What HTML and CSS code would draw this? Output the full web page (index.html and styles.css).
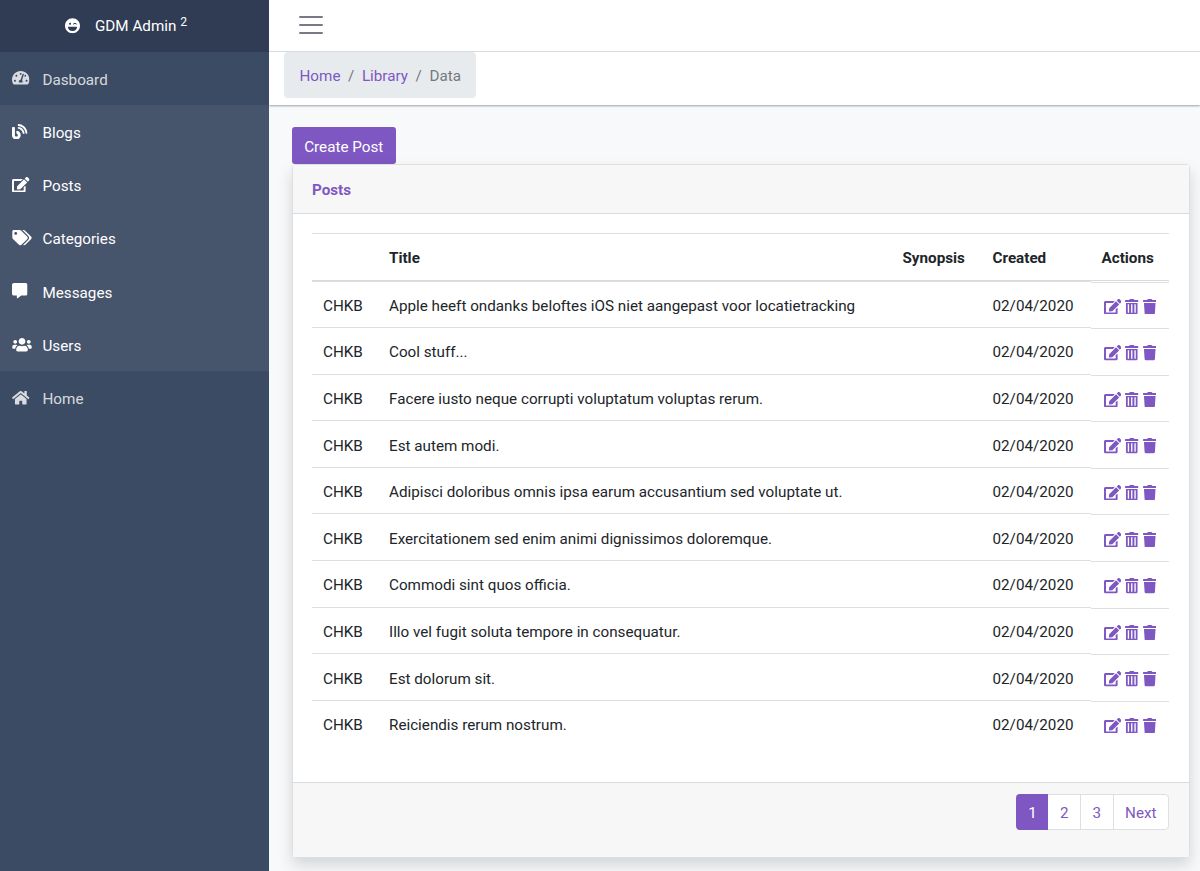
FILE: index.html
```
<!DOCTYPE html>
<html lang="en">
<head>
    <meta charset="UTF-8">
    <meta name="viewport" content="width=device-width, initial-scale=1.0">
    <title>GDM Admin</title>
    <link rel="stylesheet" href="styles.css">
</head>
<body>
    <!-- Icon shapes -->
    <svg class="sprite" xmlns="http://www.w3.org/2000/svg">
        <symbol id="laugh" viewBox="0 0 496 512"><path d="M248 8C111 8 0 119 0 256s111 248 248 248 248-111 248-248S385 8 248 8zm20.1 198.1c4-25.2 34.2-42.1 59.9-42.1s55.9 16.9 59.9 42.1c1.7 11.1-11.4 18.3-19.8 10.8l-9.5-8.5c-14.8-13.2-46.2-13.2-61 0L288 217c-8.4 7.4-21.6.3-19.9-10.9zM168 160c17.7 0 32 14.3 32 32s-14.3 32-32 32-32-14.3-32-32 14.3-32 32-32zm88 272h-16c-73.4 0-134-55-142.9-126-1.2-9.5 6.3-18 15.9-18h270c9.6 0 17.1 8.4 15.9 18-8.9 71-69.5 126-142.9 126z"/></symbol>
        <symbol id="gauge" viewBox="0 0 576 512"><path d="M288 32C128.94 32 0 160.94 0 320c0 52.8 14.25 102.26 39.06 144.8 5.61 9.62 16.3 15.2 27.44 15.2h443c11.14 0 21.83-5.58 27.44-15.2C561.75 422.26 576 372.8 576 320c0-159.06-128.94-288-288-288zm0 64c14.71 0 26.58 10.13 30.32 23.65-1.11 2.26-2.64 4.23-3.45 6.67l-9.22 27.67c-5.13 3.49-10.97 6.01-17.64 6.01-17.67 0-32-14.33-32-32S270.33 96 288 96zM96 384c-17.67 0-32-14.33-32-32s14.33-32 32-32 32 14.33 32 32-14.33 32-32 32zm48-160c-17.67 0-32-14.33-32-32s14.33-32 32-32 32 14.33 32 32-14.33 32-32 32zm246.77-72.41l-61.33 184C343.13 347.33 352 364.54 352 384c0 11.72-3.38 22.55-8.88 32H232.88c-5.5-9.45-8.88-20.28-8.88-32 0-33.94 26.5-61.43 59.9-63.59l61.34-184.01c4.17-12.56 17.73-19.45 30.36-15.17 12.57 4.19 19.35 17.79 15.17 30.36zm14.66 57.2l15.52-46.55c3.47-1.29 7.13-2.23 11.05-2.23 17.67 0 32 14.33 32 32s-14.33 32-32 32c-11.38-.01-20.89-6.28-26.57-15.22zM480 384c-17.67 0-32-14.33-32-32s14.33-32 32-32 32 14.33 32 32-14.33 32-32 32z"/></symbol>
        <symbol id="blog" viewBox="0 0 512 512"><path d="M172.2 226.8c-14.6-2.9-28.2 8.9-28.2 23.8V301c0 10.2 7.1 18.4 16.7 22 18.2 6.8 31.3 24.4 31.3 45 0 26.5-21.5 48-48 48s-48-21.5-48-48V120c0-13.3-10.7-24-24-24H24c-13.3 0-24 10.7-24 24v248c0 89.5 82.1 160.2 175 140.7 54.4-11.4 98.3-55.4 109.7-109.7 17.4-82.9-37-157.2-112.5-172.2zM209 0c-9.2-.5-17 6.8-17 16v31.6c0 8.5 6.6 15.5 15 15.9 129.4 7 233.4 112 240.9 241.5.5 8.4 7.5 15 15.9 15h32.1c9.2 0 16.5-7.8 16-17C503.4 139.8 372.2 8.6 209 0zm.3 96c-9.3-.7-17.3 6.7-17.3 16.1v32.1c0 8.4 6.5 15.3 14.8 15.9 76.8 6.3 138 68.2 144.9 145.2.8 8.3 7.6 14.7 15.9 14.7h32.2c9.3 0 16.8-8 16.1-17.3-8.4-110.1-96.5-198.2-206.6-206.7z"/></symbol>
        <symbol id="edit" viewBox="0 0 576 512"><path d="M402.6 83.2l90.2 90.2c3.8 3.8 3.8 10 0 13.8L274.4 405.6l-92.8 10.3c-12.4 1.4-22.9-9.1-21.5-21.5l10.3-92.8L388.8 83.2c3.8-3.8 10-3.8 13.8 0zm162-22.9l-48.8-48.8c-15.2-15.2-39.9-15.2-55.2 0l-35.4 35.4c-3.8 3.8-3.8 10 0 13.8l90.2 90.2c3.8 3.8 10 3.8 13.8 0l35.4-35.4c15.2-15.3 15.2-40 0-55.2zM384 346.2V448H64V128h229.8c3.2 0 6.2-1.3 8.5-3.5l40-40c7.6-7.6 2.2-20.5-8.5-20.5H48C21.5 64 0 85.5 0 112v352c0 26.5 21.5 48 48 48h352c26.5 0 48-21.5 48-48V306.2c0-10.7-12.9-16-20.5-8.5l-40 40c-2.2 2.3-3.5 5.3-3.5 8.5z"/></symbol>
        <symbol id="tags" viewBox="0 0 640 512"><path d="M497.941 225.941L286.059 14.059A48 48 0 0 0 252.118 0H48C21.49 0 0 21.49 0 48v204.118a48 48 0 0 0 14.059 33.941l211.882 211.882c18.744 18.745 49.136 18.746 67.882 0l204.118-204.118c18.745-18.745 18.745-49.137 0-67.882zM112 160c-26.51 0-48-21.49-48-48s21.49-48 48-48 48 21.49 48 48-21.49 48-48 48zm513.941 133.823L421.823 497.941c-18.745 18.745-49.137 18.745-67.882 0l-.36-.36L527.64 323.522c16.999-16.999 26.36-39.6 26.36-63.64s-9.362-46.641-26.36-63.64L331.397 0h48.721a48 48 0 0 1 33.941 14.059l211.882 211.882c18.745 18.745 18.745 49.137 0 67.882z"/></symbol>
        <symbol id="message" viewBox="0 0 512 512"><path d="M448 0H64C28.7 0 0 28.7 0 64v288c0 35.3 28.7 64 64 64h96v84c0 9.8 11.2 15.5 19.1 9.7L304 416h144c35.3 0 64-28.7 64-64V64c0-35.3-28.7-64-64-64z"/></symbol>
        <symbol id="users" viewBox="0 0 640 512"><path d="M96 224c35.3 0 64-28.7 64-64s-28.7-64-64-64-64 28.7-64 64 28.7 64 64 64zm448 0c35.3 0 64-28.7 64-64s-28.7-64-64-64-64 28.7-64 64 28.7 64 64 64zm32 32h-64c-17.6 0-33.5 7.1-45.1 18.6 40.3 22.1 68.9 62 75.1 109.4h66c17.7 0 32-14.3 32-32v-32c0-35.3-28.7-64-64-64zm-256 0c61.9 0 112-50.1 112-112S381.9 32 320 32 208 82.1 208 144s50.1 112 112 112zm76.8 32h-8.3c-20.8 10-43.9 16-68.5 16s-47.6-6-68.5-16h-8.3C179.6 288 128 339.6 128 403.2V432c0 26.5 21.5 48 48 48h288c26.5 0 48-21.5 48-48v-28.8c0-63.6-51.6-115.2-115.2-115.2zm-223.7-13.4C161.5 263.1 145.6 256 128 256H64c-35.3 0-64 28.7-64 64v32c0 17.7 14.3 32 32 32h65.9c6.3-47.4 34.9-87.3 75.2-109.4z"/></symbol>
        <symbol id="house" viewBox="0 0 576 512"><path d="M280.37 148.26L96 300.11V464a16 16 0 0 0 16 16l112.06-.29a16 16 0 0 0 15.92-16V368a16 16 0 0 1 16-16h64a16 16 0 0 1 16 16v95.64a16 16 0 0 0 16 16.05L464 480a16 16 0 0 0 16-16V300L295.67 148.26a12.19 12.19 0 0 0-15.3 0zM571.6 251.47L488 182.56V44.05a12 12 0 0 0-12-12h-56a12 12 0 0 0-12 12v72.61L318.47 43a48 48 0 0 0-61 0L4.34 251.47a12 12 0 0 0-1.6 16.9l25.5 31A12 12 0 0 0 45.15 301l235.22-193.74a12.19 12.19 0 0 1 15.3 0L530.9 301a12 12 0 0 0 16.9-1.6l25.5-31a12 12 0 0 0-1.7-16.93z"/></symbol>
        <symbol id="bin" viewBox="0 0 448 512"><path fill-rule="evenodd" d="M432 32H312l-9.4-18.7A24 24 0 0 0 281.1 0H166.8a23.72 23.72 0 0 0-21.4 13.3L136 32H16A16 16 0 0 0 0 48v32a16 16 0 0 0 16 16h416a16 16 0 0 0 16-16V48a16 16 0 0 0-16-16zM32 128h384v336a48 48 0 0 1-48 48H80a48 48 0 0 1-48-48zM92 176v276h44V176zM202 176v276h44V176zM312 176v276h44V176z"/></symbol>
        <symbol id="trash" viewBox="0 0 448 512"><path d="M432 32H312l-9.4-18.7A24 24 0 0 0 281.1 0H166.8a23.72 23.72 0 0 0-21.4 13.3L136 32H16A16 16 0 0 0 0 48v32a16 16 0 0 0 16 16h416a16 16 0 0 0 16-16V48a16 16 0 0 0-16-16zM53.2 467a48 48 0 0 0 47.9 45h245.8a48 48 0 0 0 47.9-45L416 128H32z"/></symbol>
    </svg>

    <div class="wrapper">
        <!-- Sidebar -->
        <nav class="sidebar">
            <a class="brand" href="#"><svg class="icon"><use href="#laugh"/></svg><span>GDM Admin <sup>2</sup></span></a>
            <a class="item" href="#"><svg class="icon"><use href="#gauge"/></svg>Dasboard</a>
            <div class="group">
                <a class="item" href="#"><svg class="icon narrow"><use href="#blog"/></svg>Blogs</a>
                <a class="item" href="#"><svg class="icon"><use href="#edit"/></svg>Posts</a>
                <a class="item" href="#"><svg class="icon wide"><use href="#tags"/></svg>Categories</a>
                <a class="item" href="#"><svg class="icon narrow"><use href="#message"/></svg>Messages</a>
                <a class="item" href="#"><svg class="icon wide"><use href="#users"/></svg>Users</a>
            </div>
            <a class="item" href="#"><svg class="icon"><use href="#house"/></svg>Home</a>
        </nav>

        <div class="main">
            <header class="topbar">
                <div class="toggle-row">
                    <button class="toggler" aria-label="Menu"><span></span><span></span><span></span></button>
                </div>
                <div class="crumb-row">
                    <ol class="breadcrumb">
                        <li><a href="#">Home</a></li>
                        <li><a href="#">Library</a></li>
                        <li>Data</li>
                    </ol>
                </div>
            </header>

            <div class="content">
                <a class="btn" href="#">Create Post</a>
                <div class="card">
                    <div class="card-header">Posts</div>
                    <div class="card-body">
                        <table class="table">
                            <thead>
                                <tr>
                                    <th class="col-tag"></th>
                                    <th class="col-title">Title</th>
                                    <th class="col-synopsis">Synopsis</th>
                                    <th class="col-created">Created</th>
                                    <th class="col-actions">Actions</th>
                                </tr>
                            </thead>
                            <tbody id="posts"></tbody>
                        </table>
                    </div>
                    <div class="card-footer">
                        <ul class="pagination">
                            <li class="active"><a href="#">1</a></li>
                            <li><a href="#">2</a></li>
                            <li><a href="#">3</a></li>
                            <li><a href="#">Next</a></li>
                        </ul>
                    </div>
                </div>
            </div>
        </div>
    </div>

    <script>
        const titles = [
            'Apple heeft ondanks beloftes iOS niet aangepast voor locatietracking',
            'Cool stuff...',
            'Facere iusto neque corrupti voluptatum voluptas rerum.',
            'Est autem modi.',
            'Adipisci doloribus omnis ipsa earum accusantium sed voluptate ut.',
            'Exercitationem sed enim animi dignissimos doloremque.',
            'Commodi sint quos officia.',
            'Illo vel fugit soluta tempore in consequatur.',
            'Est dolorum sit.',
            'Reiciendis rerum nostrum.'
        ];

        // One table row per post
        document.getElementById('posts').innerHTML = titles.map(title => `
            <tr>
                <td>CHKB</td>
                <td>${title}</td>
                <td></td>
                <td>02/04/2020</td>
                <td class="actions"><div>
                    <svg class="act-edit"><use href="#edit"/></svg>
                    <svg class="act-bin"><use href="#bin"/></svg>
                    <svg class="act-bin"><use href="#trash"/></svg>
                </div></td>
            </tr>`).join('');
    </script>
</body>
</html>
```
FILE: styles.css
```
* {
    margin: 0;
    padding: 0;
    box-sizing: border-box;
}

body {
    font-family: Roboto, sans-serif;
    font-size: 15.22px;
    line-height: 1.5;
    color: #212529;
    background-color: #f8f9fb;
    overflow: hidden;
}

a {
    color: #7e57c2;
    text-decoration: none;
}

ul, ol {
    list-style: none;
}

svg {
    fill: currentColor;
}

.sprite {
    display: none;
}

.wrapper {
    display: flex;
    height: 871px;
}

/* Sidebar */
.sidebar {
    flex: 0 0 269px;
    background-color: #3c4b64;
}

.brand {
    display: flex;
    align-items: center;
    height: 51.5px;
    padding: 1px 0 0 65px;
    gap: 15px;
    color: #fff;
    background-color: #303c54;
}

.brand .icon {
    width: 15px;
    height: 15.5px;
    margin-bottom: 1px;
}

.brand sup {
    font-size: 80%;
    line-height: 0;
    position: relative;
    top: -0.4em;
    vertical-align: baseline;
}

.item {
    display: flex;
    align-items: center;
    height: 53.25px;
    padding: 4px 12px 0;
    color: rgba(255, 255, 255, 0.8);
}

.item .icon {
    width: 17.5px;
    height: 15.5px;
    margin: 0 13px 4px 0;
}

.item .icon.wide {
    width: 20px;
    margin-right: 10.5px;
}

.item .icon.narrow {
    width: 15.5px;
    margin-right: 15px;
}

.group {
    background-color: #46546c;
}

.group .item {
    color: #fff;
}

/* Top bar */
.main {
    flex: 1;
    min-width: 0;
}

.topbar {
    height: 105px;
    background-color: #fff;
    box-shadow: 0 1px 2px rgba(60, 75, 100, 0.5);
}

.toggle-row {
    height: 52px;
    padding: 16px 30px 0;
    border-bottom: 1px solid #d8dbe0;
}

.toggler {
    display: flex;
    flex-direction: column;
    gap: 6px;
    width: 24px;
    border: 0;
    background: none;
}

.toggler span {
    width: 24px;
    height: 2px;
    border-radius: 1px;
    background-color: #7b7885;
}

.crumb-row {
    padding-left: 15px;
}

.breadcrumb {
    display: inline-flex;
    height: 46px;
    padding: 13px 15px 0 15.5px;
    border-radius: 4px;
    background-color: #e8ebee;
}

.breadcrumb li {
    color: #73797e;
}

.breadcrumb li + li::before {
    content: "/";
    padding: 0 7.6px;
}

/* Content */
.content {
    padding: 22px 10.5px 0 23px;
}

.btn {
    display: block;
    width: 103.5px;
    height: 36.5px;
    line-height: 40px;
    text-align: center;
    color: #fff;
    background-color: #7e57c2;
    border-radius: 3px;
}

.card {
    display: flex;
    flex-direction: column;
    height: 694px;
    border: 1px solid #dddfe2;
    border-radius: 4px;
    background-color: #fff;
    box-shadow: 0 7px 15px rgba(0, 0, 0, 0.15);
}

.card-header {
    height: 49px;
    padding: 14px 19px 0;
    font-weight: 700;
    color: #7e57c2;
    background-color: #f7f7f7;
    border-bottom: 1px solid #d8dbe0;
}

.card-body {
    flex: 1;
    padding: 19px 19.5px 0 19px;
}

.card-footer {
    display: flex;
    justify-content: flex-end;
    height: 75px;
    padding: 11.5px 19.5px;
    background-color: #f7f7f7;
    border-top: 1px solid #d8dbe0;
}

/* Posts table */
.table {
    width: 100%;
    table-layout: fixed;
    border-spacing: 0;
}

.table th,
.table td {
    height: 46.6px;
    padding: 4px 11.5px 0 11px;
    text-align: left;
    vertical-align: middle;
    white-space: nowrap;
    border-top: 1px solid #dcdfe3;
}

.table th {
    height: 48px;
    border-bottom: 1px solid #d8dbe0;
}

.col-tag { width: 66px; }
.col-synopsis { width: 90px; }
.col-created { width: 109px; }
.col-actions { width: 78.5px; }

.table .actions {
    transform: translateY(1px);
}

.actions div {
    display: flex;
    align-items: center;
    gap: 4px;
    margin-top: -2px;
    padding-left: 2px;
    color: #7e57c2;
}

.act-edit {
    width: 17.5px;
    height: 15.5px;
}

.act-bin {
    width: 13.5px;
    height: 15.5px;
}

/* Pagination */
.pagination {
    display: flex;
    height: 36px;
    border: 1px solid #dddfe3;
    border-radius: 4px;
    background-color: #fff;
}

.pagination a {
    display: block;
    padding: 7px 11.5px 0;
}

.pagination li + li {
    border-left: 1px solid #dddfe3;
}

.pagination .active {
    margin: -1px 0 -1px -1px;
    padding: 1px 0 0 1px;
    border-radius: 4px 0 0 4px;
    background-color: #7e57c2;
}

.pagination .active a {
    color: #fff;
}

.pagination .active + li {
    border-left: 0;
}
```
